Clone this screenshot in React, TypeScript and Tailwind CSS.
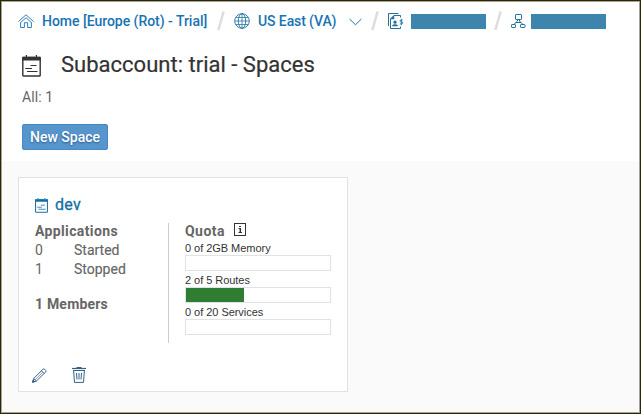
import React from "react";

function Slash() {
  return (
    <svg className="shrink-0" width="8" height="20" viewBox="0 0 8 20" fill="none" stroke="#dedede" strokeWidth="2.6">
      <path d="M6.6 0.5L1.4 19" />
    </svg>
  );
}

function CalendarIcon({ className, stroke = 1.4 }: { className: string; stroke?: number }) {
  return (
    <svg className={className} viewBox="0 0 19 22" fill="none" stroke="currentColor" strokeWidth={stroke}>
      <rect x="0.8" y="2.4" width="17.4" height="18.6" rx="0.8" />
      <path d="M0.3 1.8H3.2V3H5.6V1.8H13.2V3H15.6V1.8H18.7V5.4H0.3Z" fill="currentColor" stroke="none" />
      <path d="M4.4 0V2.6M14.4 0V2.6" strokeWidth="1.3" />
      <path d="M8.5 10.5H14.5M3.2 13.5H10M5 16.5H15.5" strokeWidth="1.2" />
    </svg>
  );
}

function HomeIcon() {
  return (
    <svg className="shrink-0" width="16" height="15" viewBox="0 0 16 15" fill="none" stroke="currentColor" strokeWidth="0.9">
      <path d="M0.4 7.6L8 0.8L15.6 7.6M2.2 9L8 3.7L13.8 9" />
      <path d="M2.6 8.6V13.5H6.4V8.7H9.6V13.5H13.4V8.6" />
    </svg>
  );
}

function GlobeIcon() {
  return (
    <svg className="shrink-0" width="16" height="16" viewBox="0 0 16 16" fill="none" stroke="currentColor" strokeWidth="0.9">
      <circle cx="8" cy="8" r="7.3" />
      <ellipse cx="8" cy="8" rx="3.7" ry="7.3" />
      <path d="M8 0.7V15.3M0.7 8H15.3M1.9 4.5H14.1M1.9 11.5H14.1" strokeWidth="0.75" />
    </svg>
  );
}

function AccountIcon() {
  return (
    <svg className="shrink-0" width="16" height="17" viewBox="0 0 16 17" fill="none" stroke="currentColor" strokeWidth="1">
      <path d="M0.5 13V0.5H10.5" />
      <path d="M12.5 4.5V2.5H6L2.5 6V15.5H12.5V13.5" />
      <path d="M6 2.5V6H2.5Z" fill="currentColor" strokeWidth="0.5" />
      <circle cx="7" cy="9.2" r="1.6" fill="currentColor" stroke="none" />
      <path d="M4.2 13.2V12.2L6 11.2H8L9.8 12.2V13.2Z" fill="currentColor" stroke="none" />
      <path d="M14.7 7H13Q12 7 12 7.9T13 8.9H13.8Q14.8 9 14.8 9.9T13.8 10.9H11.8M13.4 5.8V12.2" strokeWidth="0.85" />
    </svg>
  );
}

function OrgIcon() {
  return (
    <svg className="shrink-0" width="15" height="15" viewBox="0 0 15 15" fill="none" stroke="currentColor" strokeWidth="1">
      <rect x="4.5" y="0.5" width="6" height="5" rx="0.6" />
      <rect x="0.5" y="10.5" width="4" height="3" rx="0.6" />
      <rect x="9.5" y="10.5" width="4.5" height="3" rx="0.6" />
      <path d="M6.5 5.5V7L3 10.3M8.5 5.5V7L11.8 10.3M4.8 8.5H10" />
    </svg>
  );
}

function InfoIcon() {
  return (
    <svg className="shrink-0" width="13" height="13" viewBox="0 0 13 13" fill="none" stroke="#333" strokeWidth="1">
      <rect x="0.5" y="0.5" width="11" height="12" />
      <path d="M5 3.5H7M4.5 5.5H6M4.5 9.5H8" />
      <path d="M6.3 5V9.5" strokeWidth="1.5" />
    </svg>
  );
}

function PencilIcon() {
  return (
    <svg width="15" height="15" viewBox="0 0 15 15" fill="none" stroke="currentColor" strokeWidth="1">
      <path d="M0.6 14.2L1.7 10.5L11.1 1.1Q11.7 0.5 12.4 1.1L13.7 2.4Q14.4 3.1 13.8 3.8L4.4 13.1Z" />
      <path d="M9.4 2.8L12.1 5.5M1.7 10.5L4.4 13.1" />
      <path d="M3.3 11.7L10.6 4.3" strokeWidth="0.6" />
      <path d="M0.5 14.3L1.1 12.1L2.8 13.6Z" fill="currentColor" />
    </svg>
  );
}

function TrashIcon() {
  return (
    <svg width="14" height="16" viewBox="0 0 14 16" fill="none" stroke="currentColor" strokeWidth="1">
      <path d="M4.5 0.5H9.5" />
      <path d="M0 1.5H14" strokeWidth="1.2" />
      <path d="M1 3.5H13" />
      <path d="M1.6 3.5L2.5 15.4H11.5L12.4 3.5" />
      <path d="M4.5 6L5 12.5M7 6V12.5M9.5 6L9 12.5" />
    </svg>
  );
}

function QuotaBar({ label, percent }: { label: string; percent: number }) {
  return (
    <div className="h-8">
      <div className="h-[15px] whitespace-nowrap pt-px font-['Liberation_Sans',sans-serif] text-[11px] leading-[15px] tracking-[-0.04px] text-[#333]">{label}</div>
      <div className="h-4 w-[146px] border border-[#dfe2e6]">
        <div className="h-full bg-[#2f7d32]" style={{ width: `${percent}%` }} />
      </div>
    </div>
  );
}

export default function App() {
  return (
    <div className="h-[414px] w-[641px] border border-[#2c2804] font-['Roboto',sans-serif]">
      <div className="flex h-full flex-col border border-[#a5a39c] bg-[#fafafa]">
        <header className="h-[159px] shrink-0 bg-white pl-5">
          <nav className="-ml-1 flex h-[38px] items-center whitespace-nowrap text-[14px] font-medium text-[#1873b4]">
            <HomeIcon />
            <span className="ml-2 w-[167px] tracking-[-0.03px]">Home [Europe (Rot) - Trial]</span>
            <span className="ml-2 flex"><Slash /></span>
            <span className="ml-[9px] flex text-[#20719c]"><GlobeIcon /></span>
            <span className="ml-2 w-[82px] tracking-[-0.1px]">US East (VA)</span>
            <svg className="ml-[9px] mt-0.5 shrink-0" width="13" height="8" viewBox="0 0 13 8" fill="none" stroke="currentColor" strokeWidth="1">
              <path d="M0.6 1L6.5 6.8L12.4 1" />
            </svg>
            <span className="ml-[9px] flex"><Slash /></span>
            <span className="ml-[9px] flex text-[#20719c]"><AccountIcon /></span>
            <span className="ml-[7px] mt-px h-[15px] w-[75px] bg-[#3d85ac]" />
            <span className="ml-2 flex"><Slash /></span>
            <span className="ml-[9px] flex text-[#20719c]"><OrgIcon /></span>
            <span className="ml-[5px] mt-px h-[15px] w-[75px] bg-[#3d85ac]" />
          </nav>
          <div className="flex h-[46px] items-center">
            <CalendarIcon className="mt-[5px] h-[22px] w-[19px] text-[#333]" />
            <h1 className="ml-5 mt-0.5 whitespace-nowrap text-[22px] tracking-[0.01px] text-[#333] [-webkit-text-stroke:0.2px_#333]">Subaccount: trial - Spaces</h1>
          </div>
          <p className="mt-[3px] h-4 text-[14px] leading-4 tracking-[0.1px] text-[#666]">All: 1</p>
          <button className="mt-[19px] block h-[26px] w-[86px] whitespace-nowrap rounded-[2px] border border-[#4389c8] bg-[#5796cd] text-[14px] font-medium leading-6 text-white [text-shadow:0_1px_2px_#24598b]">
            New Space
          </button>
        </header>
        <main className="flex-1 pl-4 pt-4">
          <section className="h-[215px] w-[330px] border border-[#e2e2e2] bg-white pl-4">
            <div className="flex h-[42px] items-center pt-3 text-[#1470a3]">
              <CalendarIcon className="h-[15px] w-[13px]" stroke={1.5} />
              <span className="ml-[7px] text-[16px] leading-5 tracking-[0.25px] [-webkit-text-stroke:0.3px_#1470a3]">dev</span>
            </div>
            <div className="flex pt-[3px]">
              <div className="h-[120px] w-[134px] border-r border-[#ccc] text-[14px] leading-[19px] text-[#666]">
                <div className="-mt-px font-bold tracking-[0.37px]">Applications</div>
                <div className="flex"><span className="w-[39px]">0</span><span className="[-webkit-text-stroke:0.15px_#666]">Started</span></div>
                <div className="flex"><span className="w-[39px]">1</span><span className="[-webkit-text-stroke:0.15px_#666]">Stopped</span></div>
                <div className="mt-4 font-bold tracking-[0.2px]">1 Members</div>
              </div>
              <div className="ml-4">
                <div className="-mt-px mb-[-1px] flex h-[19px] text-[14px] font-bold leading-[19px] tracking-[0.45px] text-[#666]">
                  <span className="w-[49px]">Quota</span>
                  <span className="pt-px"><InfoIcon /></span>
                </div>
                <QuotaBar label="0 of 2GB Memory" percent={0} />
                <QuotaBar label="2 of 5 Routes" percent={40} />
                <QuotaBar label="0 of 20 Services" percent={0} />
              </div>
            </div>
            <div className="-ml-[3px] mt-[24px] flex items-center gap-[25px] text-[#346187]">
              <PencilIcon />
              <TrashIcon />
            </div>
          </section>
        </main>
      </div>
    </div>
  );
}
